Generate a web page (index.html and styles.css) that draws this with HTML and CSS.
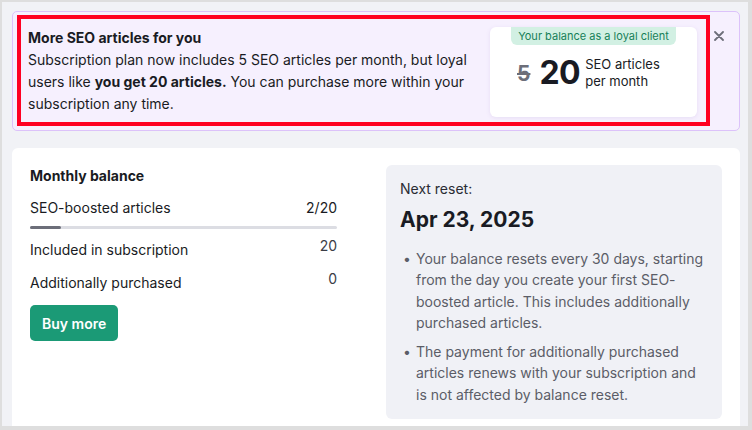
FILE: index.html
```html
<!DOCTYPE html>
<html lang="en">
  <head>
    <meta charset="UTF-8">
    <meta name="viewport" content="width=device-width, initial-scale=1.0">
    <title>SEO articles balance</title>
    <link rel="stylesheet" href="styles.css">
  </head>
  <body>
    <div class="frame">
      <div class="promo">
        <div class="promo-text">
          <div class="promo-title">More SEO articles for you</div>
          <p>Subscription plan now includes 5 SEO articles per month, but loyal users like <b>you get 20 articles.</b> You can purchase more within your subscription any time.</p>
        </div>
        <div class="loyal-card">
          <div class="loyal-badge">Your balance as a loyal client</div>
          <div class="loyal-row">
            <span class="old-num">5</span>
            <span class="new-num">20</span>
            <span class="loyal-label">SEO articles<br>per month</span>
          </div>
        </div>
        <button class="close" aria-label="Close">
          <svg width="10" height="10" viewBox="0 0 10 10"><path d="M1 1 L9 9 M9 1 L1 9" stroke="#6c6e79" stroke-width="1.8" stroke-linecap="round"/></svg>
        </button>
        <div class="highlight-box"></div>
      </div>

      <div class="balance-card">
        <div class="balance">
          <div class="balance-title">Monthly balance</div>
          <div class="row">
            <span>SEO-boosted articles</span>
            <span class="used">2/20</span>
          </div>
          <div class="bar"><div class="bar-fill" style="width: 10%"></div></div>
          <div class="row row-first">
            <span>Included in subscription</span>
            <span class="num">20</span>
          </div>
          <div class="row">
            <span>Additionally purchased</span>
            <span class="num">0</span>
          </div>
          <button class="buy">Buy more</button>
        </div>
        <div class="reset">
          <div class="reset-label">Next reset:</div>
          <div class="reset-date">Apr 23, 2025</div>
          <ul class="reset-notes">
            <li>Your balance resets every 30 days, starting from the day you create your first SEO-boosted article. This includes additionally purchased articles.</li>
            <li>The payment for additionally purchased articles renews with your subscription and is not affected by balance reset.</li>
          </ul>
        </div>
      </div>
    </div>
  </body>
</html>
```

FILE: styles.css
```css
body {
  margin: 0;
  background: #dedede;
  font-family: Inter, "Noto Sans", Arial, sans-serif;
  color: #191b23;
}
.frame {
  margin: 2px 4px 0 2px;
  height: 424px;
  box-sizing: border-box;
  overflow: hidden;
  background: #f1f2f6;
  padding: 9px 8px 0 10px;
}
.promo {
  position: relative;
  display: flex;
  gap: 10px;
  height: 120px;
  box-sizing: border-box;
  padding: 15px 42px 13px 15px;
  background: #f6f0fe;
  border: 1px solid #dcc2fa;
  border-radius: 5px;
}
.promo-text {
  flex: 1;
  font-size: 14px;
  line-height: 22px;
}
.promo-title {
  font-weight: 700;
}
.promo-text p {
  margin: 0;
}
.loyal-card {
  width: 207px;
  height: 90px;
  flex-shrink: 0;
  background: #fff;
  border-radius: 6px;
  box-shadow: 0 1px 4px rgba(120, 90, 170, 0.12);
}
.loyal-badge {
  width: 165px;
  margin: 0 auto;
  height: 18px;
  line-height: 18px;
  background: #d2f0e3;
  border-radius: 0 0 6px 6px;
  color: #178059;
  font-size: 11px;
  text-align: center;
}
.loyal-row {
  display: flex;
  align-items: center;
  margin-top: 11px;
  padding-left: 27px;
}
.old-num {
  font-size: 21px;
  font-weight: 700;
  color: #6c6e79;
  text-decoration: line-through;
  margin-right: 9px;
}
.new-num {
  font-size: 32px;
  font-weight: 700;
  line-height: 34px;
  letter-spacing: -0.5px;
  margin-right: 5px;
}
.loyal-label {
  font-size: 13px;
  line-height: 17px;
}
.close {
  position: absolute;
  top: 17px;
  right: 15px;
  padding: 0;
  border: 0;
  background: none;
  width: 10px;
  height: 10px;
  cursor: pointer;
}
.highlight-box {
  position: absolute;
  left: 4px;
  top: 3px;
  width: 693px;
  height: 111px;
  box-sizing: border-box;
  border: 4px solid #ff0022;
  pointer-events: none;
}
.balance-card {
  display: flex;
  gap: 49px;
  margin-top: 17px;
  padding: 17px 18px 20px 18px;
  background: #fff;
  border-radius: 6px;
}
.balance {
  width: 307px;
  font-size: 14px;
  line-height: 20px;
  padding-top: 1px;
}
.balance-title {
  font-weight: 700;
  margin-bottom: 12px;
}
.row {
  display: flex;
  justify-content: space-between;
}
.row + .row {
  margin-top: 13px;
}
.row-first {
  margin-top: 11px;
}
.used {
  color: #191b23;
}
.num {
  color: #3b3d46;
  margin-top: -4px;
}
.bar {
  height: 3px;
  margin-top: 8px;
  background: #dcdde3;
  border-radius: 2px;
}
.bar-fill {
  height: 3px;
  background: #6c6e79;
  border-radius: 2px;
}
.buy {
  margin-top: 12px;
  height: 36px;
  padding: 0 12px;
  border: 0;
  border-radius: 5px;
  background: #1b9a76;
  color: #fff;
  font-family: inherit;
  font-size: 14px;
  font-weight: 600;
  cursor: pointer;
}
.reset {
  width: 336px;
  box-sizing: border-box;
  padding: 14px;
  background: #f0f1f6;
  border-radius: 6px;
}
.reset-label {
  font-size: 14px;
  line-height: 20px;
  color: #2a2c34;
}
.reset-date {
  margin-top: 7px;
  font-size: 21px;
  line-height: 28px;
  font-weight: 700;
}
.reset-notes {
  list-style: none;
  margin: 14px 0 0;
  padding: 0;
  font-size: 14px;
  line-height: 21.3px;
  color: #5b5d67;
}
.reset-notes li {
  position: relative;
  padding-left: 16px;
}
.reset-notes li + li {
  margin-top: 8px;
}
.reset-notes li::before {
  content: "•";
  position: absolute;
  left: 3px;
  top: 0;
}
```
